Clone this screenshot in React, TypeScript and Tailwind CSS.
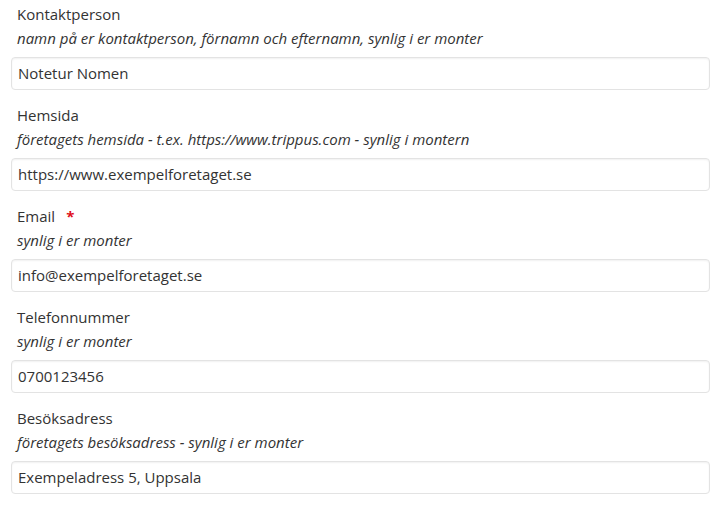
import React from "react";

type Field = {
  label: string;
  hint: string;
  value: string;
  required?: boolean;
};

const fields: Field[] = [
  {
    label: "Kontaktperson",
    hint: "namn på er kontaktperson, förnamn och efternamn, synlig i er monter",
    value: "Notetur Nomen",
  },
  {
    label: "Hemsida",
    hint: "företagets hemsida - t.ex. https://www.trippus.com - synlig i montern",
    value: "https://www.exempelforetaget.se",
  },
  {
    label: "Email",
    hint: "synlig i er monter",
    value: "info@exempelforetaget.se",
    required: true,
  },
  {
    label: "Telefonnummer",
    hint: "synlig i er monter",
    value: "0700123456",
  },
  {
    label: "Besöksadress",
    hint: "företagets besöksadress - synlig i er monter",
    value: "Exempeladress 5, Uppsala",
  },
];

export default function App() {
  return (
    <div
      className="w-[720px] h-[506px] bg-white text-[#333] overflow-hidden pt-[2px]"
      style={{ fontFamily: '"Open Sans", "Liberation Sans", sans-serif' }}
    >
      {fields.map((f) => (
        <div key={f.label} className="pl-[11px] pr-[10px] pb-[13px]">
          <div className="pl-[6px] text-[15px] leading-[24px] flex items-center">
            <span>{f.label}</span>
            {f.required && (
              <span className="ml-[11px] text-[#e0101b] font-bold text-[15px]">*</span>
            )}
          </div>
          <div className="pl-[6px] text-[15px] leading-[24px] italic text-[#333]">{f.hint}</div>
          <div className="mt-[7px] h-[33px] rounded-[4px] border border-[#e3e3e3] bg-white shadow-[inset_0_1px_2px_rgba(0,0,0,0.06)] flex items-center pl-[6px] text-[15px] text-[#333]">
            {f.value}
          </div>
        </div>
      ))}
    </div>
  );
}
